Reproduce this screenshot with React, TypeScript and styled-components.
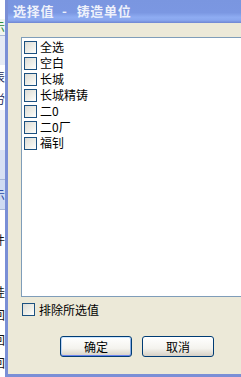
import React from "react";
import styled, { createGlobalStyle } from "styled-components";

const GlobalStyle = createGlobalStyle`
  html, body {
    margin: 0;
    padding: 0;
    background: #ffffff;
  }
  body {
    font-family: "Noto Sans CJK SC", "Liberation Sans", sans-serif;
    font-size: 12px;
  }
`;

const options = ["全选", "空白", "长城", "长城精铸", "二0", "二0厂", "福钊"];

// bits of the window behind the dialog, cut off at its left edge
const backRows: { h: number; text?: string; color?: string; bg?: string; line?: boolean }[] = [
  { h: 19 },
  { h: 17, text: "示", color: "#2e8b3e", bg: "#f2f6f0", line: true },
  { h: 29, bg: "#e6ebf5" },
  { h: 23, text: "表", color: "#1a2a5a", bg: "#ffffff" },
  { h: 22, text: "労", color: "#1a2a5a", bg: "#ffffff" },
  { h: 40, bg: "#eef1f8" },
  { h: 30, bg: "#d8e1f4", line: true },
  { h: 30, text: "示", color: "#2c4da8", bg: "#cfdbf3", line: true },
  { h: 20 },
  { h: 20, text: "件", color: "#111" },
  { h: 32 },
  { h: 20, text: "桂", color: "#111" },
  { h: 26, text: "回", color: "#111" },
  { h: 24, text: "回", color: "#111" },
  { h: 22, text: "回", color: "#111" },
];

export default function App() {
  return (
    <>
      <GlobalStyle />
      <Screen>
        <BackStrip>
          {backRows.map((r, i) => (
            <BackRow key={i} $h={r.h} $color={r.color} $bg={r.bg} $line={r.line}>
              {r.text}
            </BackRow>
          ))}
        </BackStrip>
        <Dialog>
          <TitleBar>
            <span>选择值</span>
            <Dash>-</Dash>
            <span>铸造单位</span>
          </TitleBar>
          <Client>
            <ListBox>
              {options.map((o) => (
                <Item key={o}>
                  <Check />
                  <span>{o}</span>
                </Item>
              ))}
            </ListBox>
            <ExcludeRow>
              <Check />
              <span>排除所选值</span>
            </ExcludeRow>
            <Buttons>
              <Button $focused>确定</Button>
              <Button>取消</Button>
            </Buttons>
          </Client>
        </Dialog>
      </Screen>
    </>
  );
}

const Screen = styled.div`
  width: 241px;
  height: 377px;
  overflow: hidden;
  display: flex;
`;

const BackStrip = styled.div`
  width: 5px;
  flex-shrink: 0;
  overflow: hidden;
  display: flex;
  flex-direction: column;
  background: #ffffff;
`;

const BackRow = styled.div<{ $h: number; $color?: string; $bg?: string; $line?: boolean }>`
  height: ${({ $h }) => $h}px;
  flex-shrink: 0;
  display: flex;
  align-items: center;
  margin-left: -7px;
  font-size: 12px;
  line-height: 1;
  color: ${({ $color }) => $color || "#000"};
  background: ${({ $bg }) => $bg || "#ffffff"};
  border-bottom: ${({ $line }) => ($line ? "1px solid #a9b8d8" : "none")};
  box-sizing: border-box;
`;

const Dialog = styled.div`
  flex: 1;
  min-width: 0;
  display: flex;
  flex-direction: column;
  border-left: 3px solid #7a8fd6;
  border-bottom: 3px solid #7a8fd6;
  background: #ece9d8;
`;

const TitleBar = styled.div`
  height: 23px;
  flex-shrink: 0;
  box-sizing: border-box;
  padding: 2px 0 0 5px;
  display: flex;
  align-items: flex-start;
  background: linear-gradient(
    to bottom,
    #7a96e0 0%,
    #7b97e2 55%,
    #8eacf2 75%,
    #89a6ee 88%,
    #6f86d2 100%
  );
  color: #eef1fb;
  font-weight: bold;
  font-size: 13px;
  line-height: 18px;
  letter-spacing: 0.7px;
  white-space: nowrap;
`;

const Dash = styled.span`
  margin: 0 9px 0 8px;
`;

const Client = styled.div`
  flex: 1;
  display: flex;
  flex-direction: column;
  padding: 14px 0 0 13px;
`;

const ListBox = styled.div`
  height: 260px;
  box-sizing: border-box;
  margin-right: -4px;
  background: #ffffff;
  border: 1px solid #7f9db9;
  border-right: none;
  padding: 1px 0 0 2px;
  display: flex;
  flex-direction: column;
`;

const Item = styled.div`
  height: 16px;
  display: flex;
  align-items: center;
  gap: 3px;
  font-size: 12px;
  line-height: 16px;
  color: #000;
`;

const Check = styled.span`
  width: 13px;
  height: 13px;
  flex-shrink: 0;
  box-sizing: border-box;
  border: 1px solid #1c5180;
  background: linear-gradient(135deg, #dcdcd7 0%, #f0f0ea 60%, #ffffff 100%);
`;

const ExcludeRow = styled.div`
  margin: 5px 0 0 1px;
  height: 14px;
  display: flex;
  align-items: center;
  gap: 4px;
  font-size: 12px;
  color: #000;
`;

const Buttons = styled.div`
  display: flex;
  gap: 10px;
  margin: 20px 0 0 39px;
`;

const Button = styled.button<{ $focused?: boolean }>`
  width: 72px;
  height: 21px;
  padding: 0;
  border: 1px solid #003c74;
  border-radius: 3px;
  font-family: "Noto Sans CJK SC", "Liberation Sans", sans-serif;
  font-size: 12px;
  color: #000;
  background: linear-gradient(to bottom, #ffffff 0%, #f4f3ee 60%, #d6d0c5 100%);
  box-shadow: ${({ $focused }) =>
    $focused
      ? "inset 0 1px 0 #cee7ff, inset 0 -1px 0 #6982ee, inset 1px 0 0 #bcd4f6, inset -1px 0 0 #89ade4"
      : "none"};
`;
